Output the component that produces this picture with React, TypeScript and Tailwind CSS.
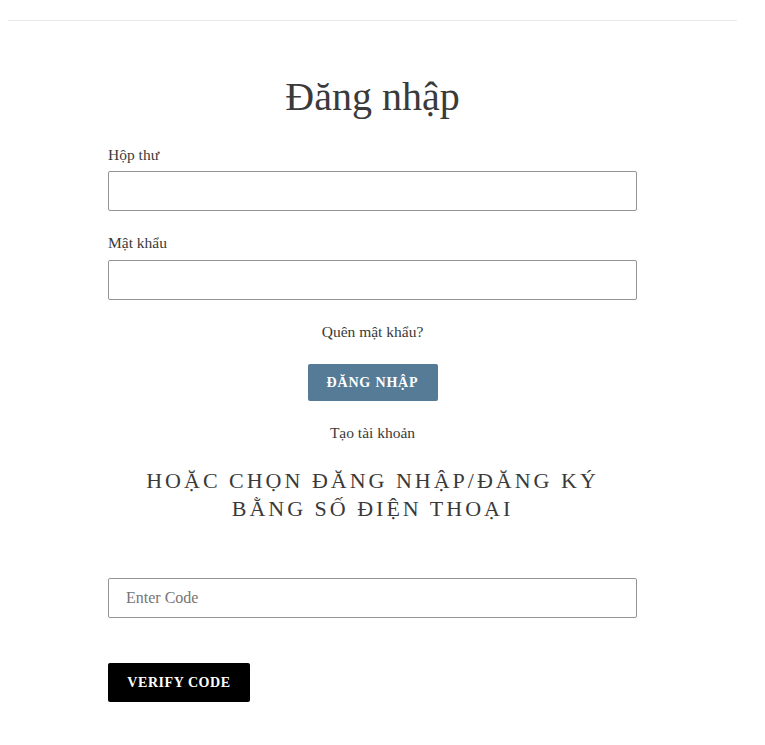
export default function App() {
  return (
    <div className="min-h-[745px] bg-white text-[#3a3a3a] font-['Liberation_Serif',serif]">
      <div className="ml-2 w-[729px] pt-5">
        <div className="border-t border-[#e8e9eb]" />
        <div className="mx-auto w-[529px] pt-[52px]">
          <h1 className="text-center text-[40px] leading-[48px] text-[#3a3a3a]">Đăng nhập</h1>

          <label className="mt-6 block text-[15.5px] leading-5">Hộp thư</label>
          <input
            type="email"
            className="mt-[6px] block h-10 w-full rounded-[2px] border border-[#949494] bg-white px-4 outline-none"
          />

          <label className="mt-[22px] block text-[15.5px] leading-5">Mật khẩu</label>
          <input
            type="password"
            className="mt-[7px] block h-10 w-full rounded-[2px] border border-[#949494] bg-white px-4 outline-none"
          />

          <p className="mt-[22px] text-center text-[15.5px] leading-5">Quên mật khẩu?</p>

          <div className="mt-[22px] flex justify-center">
            <button className="h-[37px] w-[130px] rounded-[2px] bg-[#557b97] text-sm font-bold tracking-[0.06em] text-white">
              ĐĂNG NHẬP
            </button>
          </div>

          <p className="mt-[22px] text-center text-[15.5px] leading-5">Tạo tài khoản</p>

          <h2 className="mt-6 text-center text-[22px] leading-[28px] tracking-[3px] text-[#3a3a3a]">
            HOẶC CHỌN ĐĂNG NHẬP/ĐĂNG KÝ
            <br />
            BẰNG SỐ ĐIỆN THOẠI
          </h2>

          <input
            type="text"
            placeholder="Enter Code"
            className="mt-[55px] block h-10 w-full rounded-[2px] border border-[#949494] bg-white px-[17px] text-base outline-none placeholder:text-[#757575]"
          />

          <button className="mt-[45px] h-[39px] w-[142px] rounded-[2px] bg-black text-sm font-bold tracking-[0.04em] text-white">
            VERIFY CODE
          </button>
        </div>
      </div>
    </div>
  );
}
